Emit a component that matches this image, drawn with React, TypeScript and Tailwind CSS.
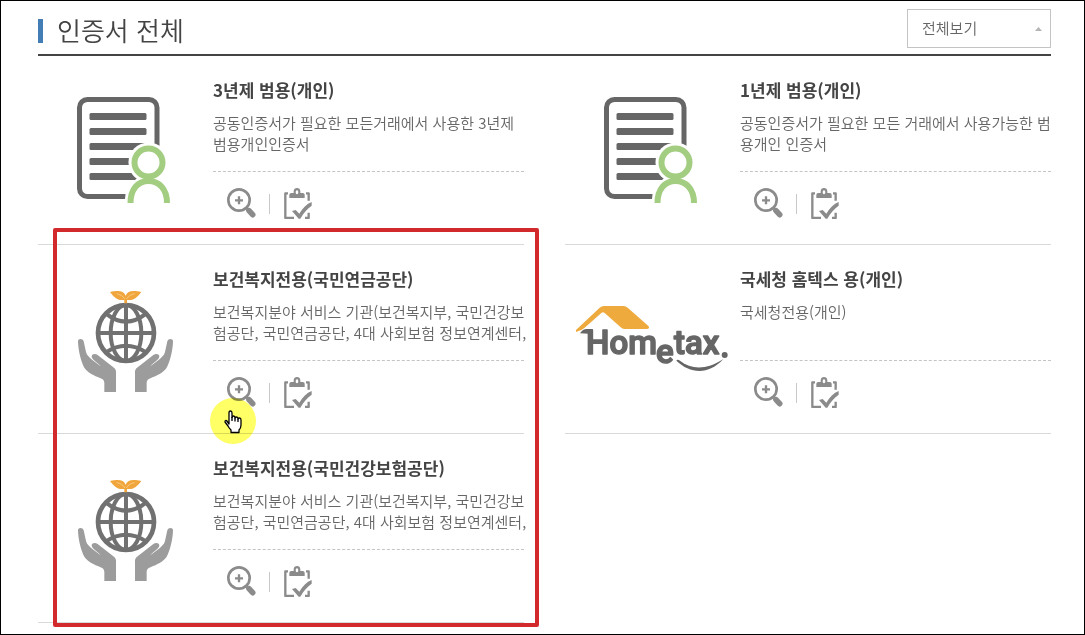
import { ReactNode } from "react";

function DocumentArt() {
  return (
    <svg width="168" height="110" viewBox="0 0 168 110" fill="none" aria-hidden="true">
      <rect x="41.5" y="3.5" width="77.5" height="97" rx="8" stroke="#666" strokeWidth="5" />
      {[17, 32, 47, 62, 77].map((y) => (
        <rect key={y} x="51.5" y={y} width="57" height="7" rx="1.5" fill="#666" />
      ))}
      <circle cx="110.5" cy="66.5" r="20" fill="#fff" />
      <path d="M87 110V103a23.5 23.5 0 0 1 47 0V110Z" fill="#fff" />
      <circle cx="110.5" cy="66.5" r="14" stroke="#a3cd80" strokeWidth="6" />
      <path d="M92.5 107C92.5 93 100 85 110.5 85S129 93 129 107" stroke="#a3cd80" strokeWidth="6" />
    </svg>
  );
}

function GlobeArt() {
  const hand =
    "M54 184C54 175 68 174 71 184L78 216C80 226 90 234 100 242L122 259C115 249 94 239 95 229C96 221 106 220 113 225L160 262C167 267 169 272 168 280V336H133V310C133 300 128 297 120 294C103 288 83 278 74 265C64 250 54 209 54 184Z";
  return (
    <svg width="168" height="110" viewBox="-66 15 504 330" fill="none" aria-hidden="true">
      <g stroke="#717171" strokeWidth="12">
        <circle cx="198" cy="159" r="84" strokeWidth="14" />
        <ellipse cx="198" cy="159" rx="46" ry="84" />
        <path d="M198 75V243M114 159H282" />
        <path d="M138 101Q198 149 258 101M138 217Q198 177 258 217" />
      </g>
      <path
        d="M193 70V60C174 62 165 55 150 36C176 30 191 32 197 47C203 32 218 30 244 36C229 55 220 62 201 60V70Z"
        fill="#f0a63c"
      />
      <path d="M170 41Q186 43 195 57M224 41Q208 43 199 57" stroke="#fbd9a0" strokeWidth="2" />
      <g fill="#9c9c9c">
        <path d={hand} />
        <path d={hand} transform="translate(393 0) scale(-1 1)" />
      </g>
    </svg>
  );
}

function HometaxArt() {
  return (
    <svg width="168" height="110" viewBox="0 0 168 110" role="img" aria-label="Hometax">
      <g transform="translate(-5 5) scale(.33333)">
        <path
          d="M48 120L119 53Q124 48 132 48H190Q198 48 204 54L266 109Q270 117 260 117H193Q187 117 182 112L134 69Q129 64 124 69L74 113Q64 122 48 126Z"
          fill="#efaa3e"
        />
        <path d="M60 130Q68 117 80 117H98V132Z" fill="#666" />
        <path d="M349 212Q352 206 360 212C395 240 440 240 490 207C445 257 390 251 349 212Z" fill="#666" />
        <circle cx="494" cy="195" r="9" fill="#666" />
      </g>
      <g
        className="font-['Roboto','Liberation_Sans',sans-serif] text-[33px] font-medium"
        fill="#666"
        stroke="#666"
        strokeWidth="1.5"
        strokeLinejoin="round"
      >
        <text x="21" y="69">Hom</text>
        <text x="91" y="78">e</text>
        <text x="109" y="69">tax</text>
      </g>
    </svg>
  );
}

function ZoomIcon() {
  return (
    <svg width="30" height="31" viewBox="51 24 90 93" fill="none" stroke="#8b8b8b" aria-hidden="true">
      <circle cx="87" cy="60" r="32" strokeWidth="8" />
      <path d="M87 49V73M75 61H99" strokeWidth="7" />
      <path d="M108 82L118 92" strokeWidth="8" />
      <path d="M117 92L128 104" strokeWidth="17" strokeLinecap="round" />
    </svg>
  );
}

function ClipboardIcon() {
  return (
    <svg width="30" height="31" viewBox="222 24 90 93" fill="none" aria-hidden="true">
      <path d="M234 40H226V114H252M285 114H296V98M288 40H296V62" stroke="#8b8b8b" strokeWidth="7" strokeLinejoin="round" />
      <path
        d="M238 54V44Q238 39 244 39H251V34Q252 24 261 24T271 34V39H278Q284 39 284 44V54ZM261 31Q257 31 257 37T261 43T265 37T261 31Z"
        fill="#8b8b8b"
        fillRule="evenodd"
      />
      <path d="M246 93L257 90L268 101C278 84 290 72 305 66V77C290 87 281 99 271 116H266Z" fill="#8b8b8b" />
    </svg>
  );
}

function HandCursor() {
  return (
    <svg
      className="absolute left-[186px] top-[165px] pointer-events-none"
      width="19"
      height="24"
      viewBox="0 0 19 24"
      fill="#fff"
      stroke="#000"
      strokeWidth="1.3"
      strokeLinejoin="round"
      aria-hidden="true"
    >
      <path d="M5 14V3Q5 1 6.500 1T8 3V7.500Q8 6 9.500 6T11 8Q11 7 12.500 7T14 9Q14 8 15.500 8T17 10V15Q17 18 15 20V22.500H7V20Q5 18 4 16L1 12Q1 10 2.500 10.500Z" />
      <path d="M8 7V11M11 8V11.500M14 9V12" fill="none" />
    </svg>
  );
}

// red frame around the two health/welfare cards, with the highlighted pointer
function Highlight() {
  return (
    <>
      <div className="absolute left-[15px] -right-[15px] -top-[17px] h-[399px] z-10 border-4 border-[#d2292d] rounded-xs pointer-events-none" />
      <div className="absolute left-[172px] top-[153px] w-[46px] h-[46px] rounded-full bg-[#ffff66] mix-blend-multiply pointer-events-none" />
      <HandCursor />
    </>
  );
}

interface Certificate {
  title: string;
  desc: string;
  art: ReactNode;
  overlay?: ReactNode;
}

const WELFARE_DESC =
  "보건복지분야 서비스 기관(보건복지부, 국민건강보\n험공단, 국민연금공단, 4대 사회보험 정보연계센터,";

const CERTIFICATES: Certificate[] = [
  {
    title: "3년제 범용(개인)",
    desc: "공동인증서가 필요한 모든거래에서 사용한 3년제\n범용개인인증서",
    art: <DocumentArt />,
  },
  {
    title: "1년제 범용(개인)",
    desc: "공동인증서가 필요한 모든 거래에서 사용가능한 범\n용개인 인증서",
    art: <DocumentArt />,
  },
  {
    title: "보건복지전용(국민연금공단)",
    desc: WELFARE_DESC,
    art: <GlobeArt />,
    overlay: <Highlight />,
  },
  {
    title: "국세청 홈텍스 용(개인)",
    desc: "국세청전용(개인)",
    art: <HometaxArt />,
  },
  {
    title: "보건복지전용(국민건강보험공단)",
    desc: WELFARE_DESC,
    art: <GlobeArt />,
  },
];

function CertificateCard({ title, desc, art, overlay }: Certificate) {
  return (
    <li className="relative flex border-b border-[#d9d9d9]">
      <div className="w-[175px] shrink-0 pt-10">{art}</div>
      <div className="flex-1 min-w-0 pt-5 pb-[25px]">
        <h3 className="text-[17px] leading-7 font-bold text-[#444]">{title}</h3>
        <p className="mt-2 pb-[17px] min-h-[59px] text-[15px] leading-[21px] font-[350] text-[#666] whitespace-pre">
          {desc}
        </p>
        <div className="flex items-center border-t border-dashed border-[#c4c4c4] pt-4 pl-[14px]">
          <button type="button" aria-label={`${title} 상세보기`} className="cursor-pointer">
            <ZoomIcon />
          </button>
          <span className="w-px h-5 ml-3 mr-[14px] bg-[#c8c8c8]" />
          <button type="button" aria-label={`${title} 신청`} className="cursor-pointer">
            <ClipboardIcon />
          </button>
        </div>
      </div>
      {overlay}
    </li>
  );
}

export default function App() {
  return (
    <main
      lang="ko"
      className="min-h-screen border border-black bg-white pl-[37px] pr-[33px] pt-2 pb-2 font-['Noto_Sans_CJK_KR',sans-serif]"
    >
      <header className="flex items-start justify-between border-b-2 border-[#444] pb-[6px]">
        <h2 className="flex items-center mt-[10px] h-6 border-l-[5px] border-[#427db5] pl-[14px] pb-1 text-[26px] font-[350] text-[#444]">
          인증서 전체
        </h2>
        <div className="relative">
          <select
            aria-label="인증서 종류"
            className="appearance-none w-36 h-[39px] border border-[#c4c4c4] bg-white pl-[14px] pr-8 text-[15px] font-[350] text-[#666]"
          >
            <option>전체보기</option>
          </select>
          <svg
            className="absolute right-[9px] top-[18px] pointer-events-none"
            width="7"
            height="4"
            viewBox="0 0 7 4"
            fill="#b5b5b5"
            aria-hidden="true"
          >
            <path d="M3.500 0L7 4H0Z" />
          </svg>
        </div>
      </header>

      <ul className="grid grid-cols-2 gap-x-[41px]">
        {CERTIFICATES.map((cert) => (
          <CertificateCard key={cert.title} {...cert} />
        ))}
      </ul>
    </main>
  );
}
